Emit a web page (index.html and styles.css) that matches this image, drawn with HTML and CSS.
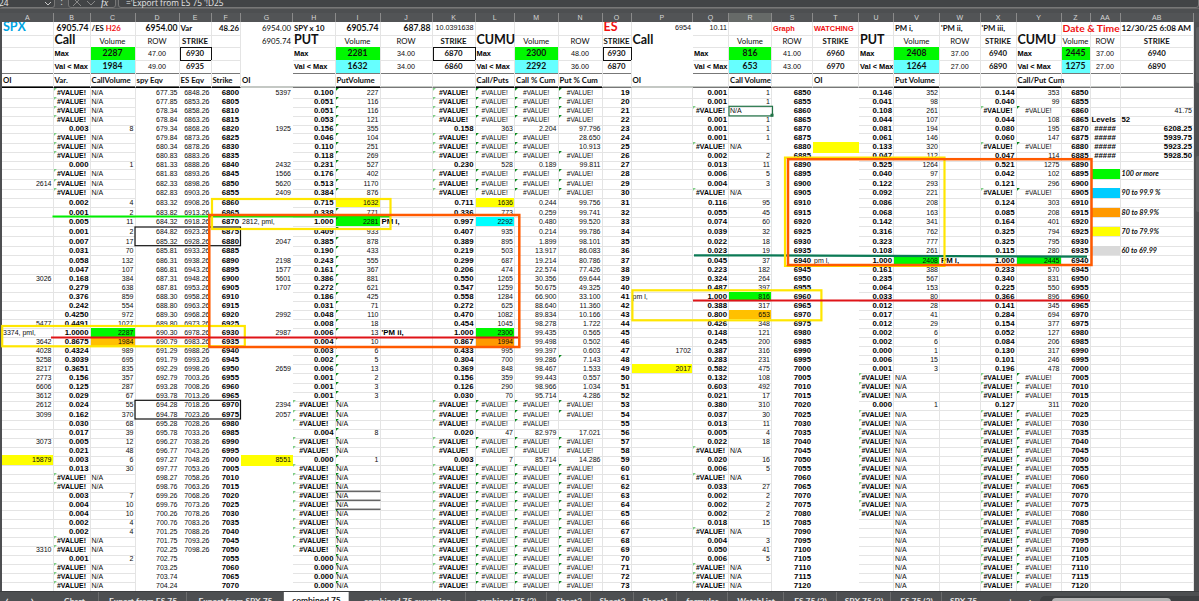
FILE: index.html
```html
<!DOCTYPE html>
<html lang="en">
<head>
  <meta charset="UTF-8" />
  <title>combined 75</title>
  <link rel="stylesheet" href="styles.css">
</head>
<body>
  <div class="formula-bar">
    <div class="name-box"><span>24</span><svg width="8" height="6" viewBox="0 0 8 6"><path d="M1 1l3 3 3-3" /></svg></div>
    <div class="dots">:</div>
    <div class="fx-box">
      <svg width="8" height="8" viewBox="0 0 8 8"><path d="M0 0l8 8M8 0l-8 8" /></svg>
      <svg width="8" height="8" viewBox="0 0 8 8"><path d="M0 3l4 4 4-4" /></svg>
      <i>fx</i>
    </div>
    <div class="formula">='Export from ES 75 '!D25</div>
  </div>

  <div class="row letters" id="letters"></div>

  <div class="main">
    <div class="sheet">
      <div id="head"></div>
      <div class="freeze"></div>
      <div id="rows"></div>
    </div>
    <div class="vscroll"><b></b><b></b></div>

    <!-- lines and boxes drawn over the cells -->
    <svg class="marks" width="1199" height="568" viewBox="0 22 1199 568">
      <path class="lime" d="M52.5 216.5H390" />
      <rect class="black" x="135" y="227" width="105.5" height="18.7" />
      <rect class="black" x="135" y="400.3" width="105.5" height="18.7" />
      <path class="thin" d="M335.5 491.2H380.5M335.5 500.2H380.5M335.5 509.2H380.5" />
      <rect class="select" x="729" y="106.3" width="43.5" height="9.6" />
      <rect class="handle" x="770.5" y="113.7" width="3" height="3" />
      <path class="teal" d="M694 255.3L820 255.6 1087 256.7" />
      <rect class="yellow" x="212" y="199" width="178.5" height="30" />
      <rect class="yellow" x="2.2" y="326" width="242.6" height="20.3" />
      <rect class="yellow" x="632.4" y="290.3" width="189" height="30" />
      <rect class="yellow" x="785" y="157.6" width="159.5" height="108.3" />
      <rect class="orange" x="209.3" y="215" width="310" height="132" />
      <rect class="orange" x="788" y="159.2" width="303.5" height="105.8" />
      <path class="red" d="M51 337.5H518" />
      <path class="red" d="M693 300.5H1090" />
    </svg>
  </div>

  <div class="tabs">
    <span class="nav">‹</span><span class="nav">›</span>
    <span>Chart</span>
    <span>Export from ES 75</span>
    <span>Export from SPX 75</span>
    <span class="active">combined 75</span>
    <span>combined 75 exception</span>
    <span>combined 75 (3)</span>
    <span>Sheet3</span>
    <span>Sheet2</span>
    <span>Sheet1</span>
    <span>formulas</span>
    <span>WatchList</span>
    <span>ES 75 (2)</span>
    <span>SPX 75 (2)</span>
    <span>ES 75 (3)</span>
    <span class="last">SPX 75</span>
    <span class="plain">···</span>
    <span class="plain">+</span>
    <span class="plain">:</span>
    <div class="hscroll"><i>◀</i><b></b><i>▶</i></div>
  </div>

  <script src="sheet.js"></script>
</body>
</html>
```
FILE: styles.css
```css
body {
  margin: 0;
  width: 1199px;
  height: 601px;
  overflow: hidden;
  background: #4d4f51;
  font-family: "Liberation Sans", Arial, sans-serif;
  font-size: 7px;
  color: #0c0c0c;
  display: flex;
  flex-direction: column;
}

/* formula bar */
.formula-bar {
  height: 8px;
  flex: none;
  display: flex;
  overflow: hidden;
  background: #4d4f51;
  border-bottom: 1px solid #666;
  margin-bottom: 4px;
  color: #e6e6e6;
  font: 8.3px/10px "Open Sans", sans-serif;
}

.formula-bar > div {
  height: 16px;
  margin-top: -8px;
  box-sizing: border-box;
}

.formula-bar svg {
  fill: none;
  stroke: #c9c9c9;
  stroke-width: 1;
}

.name-box, .fx-box, .formula {
  border: 1px solid #777;
  border-radius: 3px;
  background: #424446;
}

.name-box {
  width: 55px;
  border-left: 0;
  display: flex;
  justify-content: space-between;
  padding: 5px 2px 0 0;
}

.name-box span {
  margin-left: -1px;
}

.name-box svg {
  margin-top: 3px;
}

.dots {
  width: 13px;
  text-align: center;
  padding-top: 5px;
}

.fx-box {
  width: 48px;
  display: flex;
  gap: 6px;
  padding: 5px 3px 0 4px;
}

.fx-box svg {
  stroke: #888;
}

.fx-box i {
  font: italic 10px/9px "Liberation Serif", serif;
}

.formula {
  flex: 1;
  margin-left: 2px;
  padding: 5px 0 0 7px;
}

/* grid */
.row {
  display: grid;
  grid-template-columns:
    51.5px 37px 45px 44px 32px 29.5px 52px 42.5px 45px 52px 43px 39.5px 43.5px 44px
    29px 61.5px 36px 43px 41px 46px 35px 46px 40.5px 36px 45px 29px 30px 73.5px;
}

.letters {
  height: 9px;
  flex: none;
  padding-left: 2px;
  background: #525456;
  color: #d6d6d6;
  line-height: 9px;
  text-align: center;
}

.letters span {
  border-right: 1px solid #8a8a8a;
}

.letters .sel {
  box-sizing: border-box;
  background: #666a68;
  border-bottom: 1px solid #217346;
}

.main {
  position: relative;
  height: 568.5px;
  flex: none;
  display: flex;
}

.sheet {
  width: 1192px;
  margin-left: 2px;
  background: #fff;
  overflow: hidden;
}

.cell {
  box-sizing: border-box;
  min-width: 0;
  height: 100%;
  padding: 0 1px;
  border-right: 1px solid #e4e4e4;
  border-bottom: 1px solid #e4e4e4;
  white-space: pre;
  line-height: 9px;
  text-align: right;
}

.body .d, .body .e, .body .f, .body .g, .body .s, .body .t {
  border-color: transparent;
}

.b {
  font-weight: bold;
  font-size: 7.8px;
  color: #000;
}

.left {
  text-align: left;
}

.center {
  text-align: center;
}

.err {
  font-size: 6.5px;
  text-align: center;
}

.err.b {
  font-size: 6.9px;
  line-height: 10px;
}

.flag {
  background: linear-gradient(135deg, #0a8a1e 2px, transparent 2.2px);
}

.flag.soft {
  background: linear-gradient(135deg, #7fce86 2px, transparent 2.2px);
}

.green { background: #00f800; }
.flag.green { background: linear-gradient(135deg, #0a7a1e 2px, #00f800 2.2px); }
.yellowfill { background: #ff0; }
.cyan { background: #0ff; }
.aqua { background: #6ff; }
.blue { background: #0cf; }
.orangefill { background: #f90; }
.amber { background: #ffc000; }
.gray { background: #d9d9d9; }

.legend {
  font: italic bold 7.2px/9px Lato, sans-serif;
  text-align: left;
}

.clip {
  overflow: hidden;
}

/* frozen rows */
.head .cell {
  font-family: Lato, sans-serif;
  font-size: 7.8px;
  line-height: 12px;
}

.head .bold {
  font-weight: bold;
  color: #111;
}

.head .big {
  font-size: 12.5px;
  line-height: 10px;
  font-weight: bold;
  color: #111;
}

.head .num {
  font-size: 8.6px;
  font-weight: bold;
  color: #111;
}

.head .reg {
  font-family: "Liberation Sans", Arial, sans-serif;
  font-size: 7.2px;
}

.head .label {
  font: bold 7.4px/13px "Liberation Sans", Arial, sans-serif;
  color: #000;
}

.h3 .reg, .h4 .reg {
  line-height: 13px;
}

.head .date {
  font-size: 10.3px;
  font-weight: bold;
}

.head .stamp {
  font-size: 8.2px;
  font-weight: bold;
  color: #111;
}

.head .redtext, .redtext {
  color: #f01010;
}

.head .skyblue {
  color: #00a5e3;
}

.head .box {
  outline: 1.5px solid #111;
  outline-offset: -1px;
}

.h4 .cell {
  border-bottom: 1px solid #777;
}

.h5 .cell {
  border-bottom: 1px solid #777;
  line-height: 14px;
}

.h5 .under {
  border-bottom: 1px solid #000;
  box-shadow: inset 0 -0.5px #000;
}

.head .g, .head .p {
  border-color: transparent;
}

.freeze {
  height: 2px;
  background: #c4c8c4;
}

.vscroll {
  width: 5px;
  display: flex;
  flex-direction: column;
  gap: 68px;
  align-items: flex-end;
}

.vscroll b {
  width: 3px;
  height: 56px;
  margin-top: 5px;
  background: #5c5e60;
  border-radius: 2px 0 0 2px;
}

.marks {
  position: absolute;
  left: 0;
  top: 0;
  fill: none;
  stroke-width: 2.2;
}

.lime { stroke: #00f000; }
.teal { stroke: #0b7a55; }
.red { stroke: #e01418; }
.yellow { stroke: #ffe600; }
.orange { stroke: #ff5a00; stroke-width: 2.5; }
.black { stroke: #111; stroke-width: 1.2; }
.thin { stroke: #222; stroke-width: 1; }
.select { stroke: #217346; stroke-width: 1.2; }
.handle { fill: #217346; }

/* sheet tabs */
.tabs {
  flex: 1;
  display: grid;
  grid-template-columns: 14px 36px 49px 88px 97px 65px 117px 81px 44px 43px 43px 51px 56px 53px 54px 51px 43px 16px 19px 20px 1fr;
  color: #e8e8e8;
  font: bold 8.4px/18px Lato, sans-serif;
  text-align: center;
  white-space: nowrap;
  overflow: hidden;
  border-top: 1px solid #3c3e40;
}

.tabs span {
  height: 20px;
  box-shadow: inset -1px 0 0 -0.5px #8a8a8a;
}

.tabs .nav, .tabs .plain, .tabs .last {
  box-shadow: none;
}

.tabs .nav {
  font-size: 11px;
  line-height: 15px;
}

.tabs .active {
  margin-top: -1px;
  background: #fff;
  color: #111;
}

.hscroll {
  height: 14px;
  margin-top: 4px;
  display: flex;
  gap: 4px;
  align-items: center;
  background: #3e4042;
  border-radius: 5px 0 0 0;
  padding: 0 8px 0 3px;
}

.hscroll i {
  font: 6px/10px "DejaVu Sans", sans-serif;
}

.hscroll b {
  width: 119px;
  height: 10px;
  border-radius: 4px;
  background: #b5b5b5;
  margin-right: 12px;
}
```
FILE: sheet.js
```js
const cols = "A B C D E F G H I J K L M N O P Q R S T U V W X Y Z AA AB".split(" ");

const N = null;
const spxCall = [N,N,N,N,8,N,N,N,1,N,N,N,4,2,11,2,17,70,132,107,384,638,859,554,972,1027,2287,1984,989,695,835,357,287,67,
  55,370,68,39,12,48,6,30,N,N,7,10,10,4,4,N,N,2,N,N,N];
const spxPut = [227,116,116,121,355,104,251,269,527,402,1170,876,1632,771,2281,933,878,433,555,367,881,621,425,71,110,18,13,
  10,6,5,13,2,3,3,N,N,N,8,N,N,1,N,N,N,N,N,N,N,N,N,N,N,N,N,N];
const esCall = [1,1,N,1,1,1,N,2,11,5,3,N,95,45,60,32,18,19,37,182,264,397,816,317,653,348,121,200,316,231,475,108,492,17,
  310,30,11,4,18,N,16,5,N,27,2,2,2,15,N,3,41,5,N,N,N];
const esPut = [352,98,261,107,194,146,320,112,1264,97,293,221,208,163,341,762,777,261,2408,388,567,153,80,28,41,29,6,6,1,
  15,3,N,N,N,1,N,N,N,N,N,N,N,N,N,N,N,N,N,N,N,N,N,N,N,N];

// open interest, by row index
const oiA = {10: 2614, 20: 3026, 25: 5477, 26: "3374, pml,", 27: 3642, 28: 4028, 29: 5258, 30: 8217, 31: 2773, 32: 6606,
  33: 3612, 34: 2612, 35: 3099, 38: 3073, 40: 15879, 50: 3310};
const oiG = {0: 5397, 4: 1925, 8: 2432, 9: 1566, 10: 5620, 11: 2409, 14: "2812, pml,", 16: 2047, 18: 2198, 19: 1577,
  20: 5601, 21: 1707, 24: 2992, 26: 2987, 30: 2659, 34: 2394, 35: 2057, 40: 8551};
const oiP = {22: "pm l,", 28: 1702, 30: 2017};

const fills = {
  C26: "green", C27: "amber", I12: "yellowfill", I14: "green", L12: "yellowfill", L14: "cyan", L26: "green",
  L27: "orangefill", A40: "yellowfill", G40: "yellowfill", P30: "yellowfill", R22: "green", R24: "amber",
  T6: "yellowfill", V18: "green", Y18: "green", AA9: "green", AA11: "blue", AA13: "orangefill", AA15: "yellowfill",
  AA17: "gray"
};

const notes = {
  J14: ["PM i,", "b left"], J26: ["'PM ii,", "b left"], T18: ["pm l,", "left"], W18: ["PM i,", "b left"],
  AB2: ["41.75", ""], AA3: ["Levels", "b left"], AB3: ["52", "b left"],
  AA4: ["#####", "b center"], AA5: ["#####", "b center"], AA6: ["#####", "b center"], AA7: ["#####", "b center"],
  AB4: ["6208.25", "b"], AB5: ["5939.75", "b"], AB6: ["5923.25", "b"], AB7: ["5928.50", "b"],
  AB9: ["100 or more", "legend"], AB11: ["90 to 99.9 %", "legend"], AB13: ["80 to 89.9%", "legend"],
  AB15: ["70 to 79.9%", "legend"], AB17: ["60 to 69.99", "legend"],
  N5: ["28.650", ""], N6: ["10.913", ""], N29: ["7.143", "flag"], N36: ["", ""]
};

const ERR = "#VALUE!";

function fillRow(cells, cls) {
  const row = document.createElement("div");
  row.className = "row " + cls;
  cols.forEach(c => {
    const el = document.createElement("div");
    const [text, style] = cells[c] || ["", ""];
    el.className = "cell " + c.toLowerCase().replace(/^b$/, "bb") + " " + style;
    el.innerHTML = text;
    row.appendChild(el);
  });
  return row;
}

function volume(v, extra) {
  return v === null ? ["N/A", "left " + extra] : [v, extra];
}

function ratio(v, max, digits) {
  return v === null ? [ERR, "err b flag soft"] : [(v / max).toFixed(digits), "b"];
}

function oi(v) {
  return v === undefined ? ["", ""] : [v, typeof v === "string" ? "left" : ""];
}

const rows = document.getElementById("rows");
for (let i = 0; i < 55; i++) {
  const strike = 6800 + 5 * i;
  const c = spxCall[i], p = spxPut[i], ec = esCall[i], ep = esPut[i];
  const sum = c === null || p === null ? null : c + p;
  const esSum = ec === null || ep === null ? null : ec + ep;
  const bad = [ERR, "err flag"];

  const cells = {
    A: oi(oiA[i]),
    B: ratio(c, 2287, i >= 24 && i <= 30 ? 4 : 3),
    C: volume(c, ""),
    D: [(strike / 10.0391638).toFixed(2), ""],
    E: [i <= 50 ? (strike + 48.26).toFixed(2) : "", ""],
    F: [strike, "b"],
    G: oi(oiG[i]),
    H: p === null && i > 50 ? ["0.000", "b"] : ratio(p, 2281, 3),
    I: volume(p, "flag"),
    K: ratio(sum, 2300, 3),
    L: sum === null ? bad : [sum, ""],
    M: sum === null ? bad : [(c / sum * 100).toFixed(3), ""],
    N: sum === null ? bad : [(p / sum * 100).toFixed(3), ""],
    O: [19 + i, "b"],
    P: oi(oiP[i]),
    Q: ratio(ec, 816, 3),
    R: volume(ec, ""),
    S: [strike + 50, "b"],
    U: i > 46 ? ["", ""] : ratio(ep, 2408, 3),
    V: volume(ep, ""),
    X: ratio(esSum, 2445, 3),
    Y: esSum === null ? bad : [esSum, ""],
    Z: [strike + 50, "b"]
  };

  cols.forEach(col => {
    const key = col + i;
    if (notes[key]) cells[col] = notes[key];
    if (fills[key]) {
      const old = cells[col] || ["", ""];
      cells[col] = [old[0], old[1] + " " + fills[key]];
    }
  });

  let size = "";
  if (i >= 9 && i <= 17) size = "tall";
  if (i >= 33 && i <= 35) size = "mid";
  const row = fillRow(cells, "body " + size);
  row.style.height = (size === "tall" ? 87 / 9 : size === "mid" ? 28 / 3 : 9) + "px";
  rows.appendChild(row);
}

// column letters
document.getElementById("letters").innerHTML =
  cols.map(c => `<span class="${c === "R" ? "sel" : ""}">${c}</span>`).join("");

const head = [
  {
    A: ["SPX", "big left skyblue"], B: ["6905.74", "num"], C: ['/ES <span class="redtext">H26</span>', "bold left"],
    D: ["6954.00", "num"], E: ["Var", "bold left"], F: ["48.26", "bold"], G: ["6954.00", ""], H: ["SPY x 10", "bold left"],
    I: ["6905.74", "num"], J: ["687.88", "num"], K: ["10.0391638", "reg"], O: ["ES", "big left redtext"],
    P: ["6954", "reg"], Q: ["10.11", "reg"], S: ["Graph", "label left redtext"], T: ["WATCHING", "label left redtext"],
    V: ["PM i,", "bold left"], W: ["'PM ii,", "bold left"], X: ["'PM iii,", "bold left"],
    Z: ["Date &amp; Time", "date left redtext"], AB: ["12/30/25 6:08 AM", "stamp left"]
  },
  {
    B: ["Call", "big left"], C: ["Volume", "center"], D: ["ROW", "center"], E: ["STRIKE", "bold center"],
    G: ["6905.74", ""], H: ["PUT", "big left"], I: ["Volume", "center"], J: ["ROW", "center"],
    K: ["STRIKE", "bold center"], L: ["CUMU", "big left"], M: ["Volume", "center"], N: ["ROW", "center"],
    O: ["STRIKE", "bold center"], P: ["Call", "big left"], R: ["Volume", "center"], S: ["ROW", "center"],
    T: ["STRIKE", "bold center"], U: ["PUT", "big left"], V: ["Volume", "center"], W: ["ROW", "center"],
    X: ["STRIKE", "bold center"], Y: ["CUMU", "big left"], Z: ["Volume", "center"], AA: ["ROW", "center"],
    AB: ["STRIKE", "bold center"]
  },
  levels("Max", "green", [2287, 47, 6930], [2281, 34, 6870], [2300, 48, 6930], [816, 41, 6960], [2408, 37, 6940], [2445, 37, 6940]),
  levels("Val &lt; Max", "aqua", [1984, 49, 6935], [1632, 34, 6860], [2292, 36, 6870], [653, 43, 6970], [1264, 27, 6890], [1275, 27, 6890]),
  {
    A: ["OI", "bold left under"], B: ["Var.", "bold left under"], C: ["CallVolume", "bold left under"],
    D: ["spy Eqv", "bold left under"], E: ["ES Eqv", "bold left under"], F: ["Strike", "bold left under"],
    G: ["OI", "bold left"], I: ["PutVolume", "bold left under"], L: ["Call/Puts", "bold left under"],
    M: ["Call % Cum", "bold left under"], N: ["Put % Cum", "bold left under"], P: ["OI", "bold left"],
    R: ["Call Volume", "bold left under"], T: ["OI", "bold left"], V: ["Put Volume", "bold left under"],
    Y: ["Call/Put Cum", "bold left under"]
  }
];

function levels(name, fill, ...groups) {
  const places = [["B", "C", "D", "E"], ["H", "I", "J", "K"], ["L", "M", "N", "O"], ["Q", "R", "S", "T"],
    ["U", "V", "W", "X"], ["Y", "Z", "AA", "AB"]];
  const cells = {};
  groups.forEach(([vol, row, strike], g) => {
    const [a, b, c, d] = places[g];
    cells[a] = [name, "label left clip"];
    cells[b] = [vol, "num center " + fill];
    cells[c] = [row.toFixed(2), "reg center"];
    cells[d] = [strike, "bold center" + (g < 3 && fill === "green" ? " box" : "")];
  });
  return cells;
}

head.forEach((cells, i) => {
  const row = fillRow(cells, "head h" + (i + 1));
  row.style.height = [12.5, 12.5, 13, 13, 13][i] + "px";
  document.getElementById("head").appendChild(row);
});
```
